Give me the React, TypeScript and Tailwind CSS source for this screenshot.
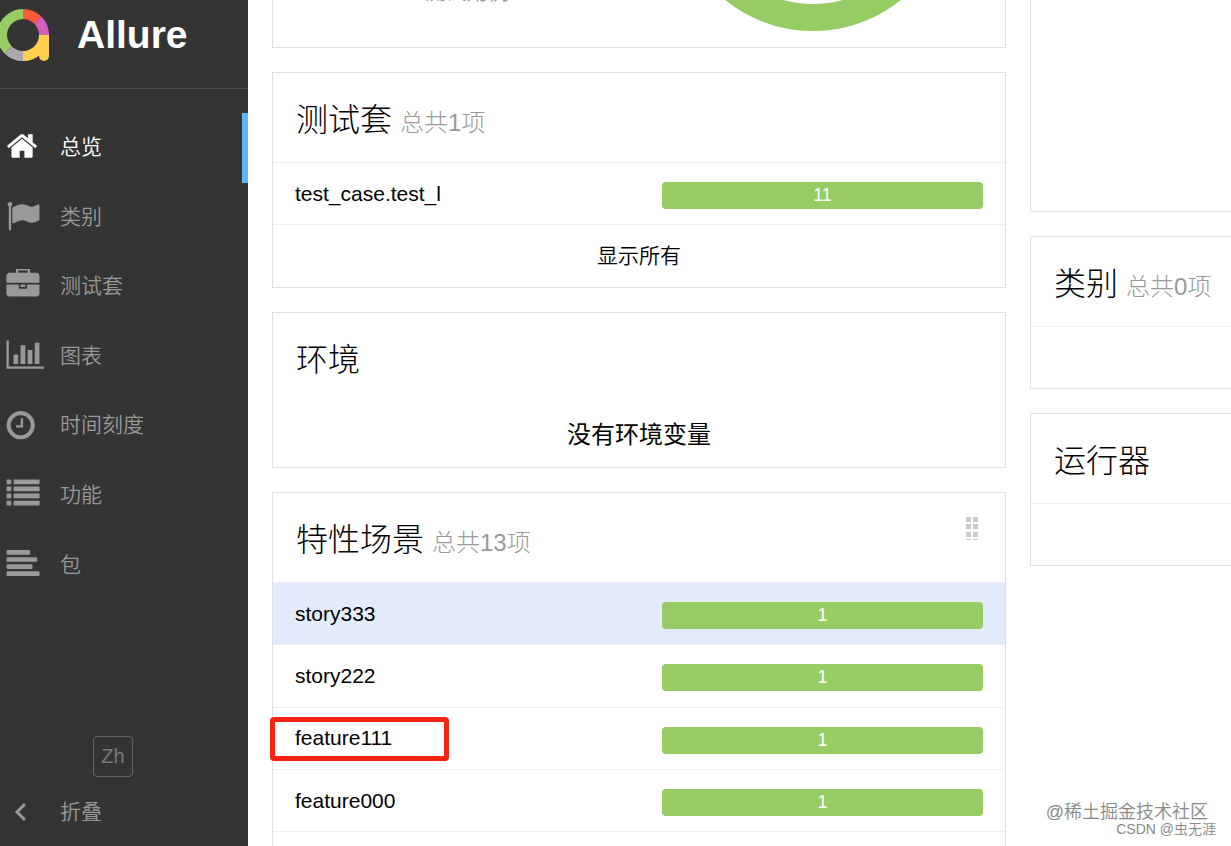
type NavEntry = {
  label: string;
  icon: keyof typeof icons;
};

type Row = {
  name: string;
  passed: number;
  hovered?: boolean;
  marked?: boolean;
};

const icons = {
  home: {
    viewBox: "32 32 2048 1792",
    d: "M1472 992v480q0 26-19 45t-45 19h-384v-384h-256v384h-384q-26 0-45-19t-19-45v-480q0-1 .5-3t.5-3l575-474 575 474q1 2 1 6zm223-69l-62 74q-8 9-21 11h-3q-13 0-21-7l-692-577-692 577q-12 8-24 7-13-2-21-11l-62-74q-8-10-7-23.5t11-21.5l719-599q32-26 76-26t76 26l244 204v-195q0-14 9-23t23-9h192q14 0 23 9t9 23v408l219 182q10 8 11 21.5t-7 23.5z",
  },
  flag: {
    viewBox: "-16 24 2048 1792",
    d: "M320 256q0 72-64 110v1266q0 13-9.5 22.5t-22.5 9.5h-64q-13 0-22.5-9.5t-9.5-22.5v-1266q-64-38-64-110 0-53 37.5-90.5t90.5-37.5 90.5 37.5 37.5 90.5zm1472 64v763q0 25-12.5 38.5t-39.5 27.5q-215 116-369 116-61 0-123.5-22t-108.5-48-115.5-48-142.5-22q-192 0-464 146-17 9-33 9-26 0-45-19t-19-45v-742q0-32 31-55 21-14 79-43 236-120 421-120 107 0 200 29t219 88q38 19 88 19 54 0 117.5-21t110-47 88-47 54.5-21q26 0 45 19t19 45z",
  },
  briefcase: {
    viewBox: "-16 48 2048 1792",
    d: "M640 256h512v-128h-512v128zm1152 640v480q0 66-47 113t-113 47h-1472q-66 0-113-47t-47-113v-480h672v160q0 26 19 45t45 19h320q26 0 45-19t19-45v-160h672zm-768 0v128h-256v-128h256zm768-480v384h-1792v-384q0-66 47-113t113-47h352v-160q0-40 28-68t68-28h576q40 0 68 28t28 68v160h352q66 0 113 47t47 113z",
  },
  chart: {
    viewBox: "-16 48 2048 1792",
    d: "M640 896v512h-256v-512h256zm384-512v1024h-256v-1024h256zm1024 1152v128h-2048v-1536h128v1408h1920zm-640-896v768h-256v-768h256zm384-384v1152h-256v-1152h256z",
  },
  clock: {
    viewBox: "104 16 2048 1792",
    d: "M1024 544v448q0 14-9 23t-23 9h-320q-14 0-23-9t-9-23v-64q0-14 9-23t23-9h224v-352q0-14 9-23t23-9h64q14 0 23 9t9 23zm416 352q0-148-73-273t-198-198-273-73-273 73-198 198-73 273 73 273 198 198 273 73 273-73 198-198 73-273zm224 0q0 209-103 385.5t-279.5 279.5-385.5 103-385.5-103-279.5-279.5-103-385.5 103-385.5 279.5-279.5 385.5-103 385.5 103 279.5 279.5 103 385.5z",
  },
  list: {
    viewBox: "-24 48 2048 1792",
    d: "M32 128h192q32 0 32 32v192q0 32-32 32h-192q-32 0-32-32v-192q0-32 32-32zm384 0h1344q32 0 32 32v192q0 32-32 32h-1344q-32 0-32-32v-192q0-32 32-32zM32 512h192q32 0 32 32v192q0 32-32 32h-192q-32 0-32-32v-192q0-32 32-32zm384 0h1344q32 0 32 32v192q0 32-32 32h-1344q-32 0-32-32v-192q0-32 32-32zM32 896h192q32 0 32 32v192q0 32-32 32h-192q-32 0-32-32v-192q0-32 32-32zm384 0h1344q32 0 32 32v192q0 32-32 32h-1344q-32 0-32-32v-192q0-32 32-32zM32 1280h192q32 0 32 32v192q0 32-32 32h-192q-32 0-32-32v-192q0-32 32-32zm384 0h1344q32 0 32 32v192q0 32-32 32h-1344q-32 0-32-32v-192q0-32 32-32z",
  },
  align: {
    viewBox: "-24 16 2048 1792",
    d: "M64 128h1152q64 0 64 64v128q0 64-64 64h-1152q-64 0-64-64v-128q0-64 64-64zM64 512h1536q64 0 64 64v128q0 64-64 64h-1536q-64 0-64-64v-128q0-64 64-64zM64 896h1280q64 0 64 64v128q0 64-64 64h-1280q-64 0-64-64v-128q0-64 64-64zM64 1280h1664q64 0 64 64v128q0 64-64 64h-1664q-64 0-64-64v-128q0-64 64-64z",
  },
};

const navEntries: NavEntry[] = [
  { label: "总览", icon: "home" },
  { label: "类别", icon: "flag" },
  { label: "测试套", icon: "briefcase" },
  { label: "图表", icon: "chart" },
  { label: "时间刻度", icon: "clock" },
  { label: "功能", icon: "list" },
  { label: "包", icon: "align" },
];

const suites: Row[] = [{ name: "test_case.test_l", passed: 11 }];

const features: Row[] = [
  { name: "story333", passed: 1, hovered: true },
  { name: "story222", passed: 1 },
  { name: "feature111", passed: 1, marked: true },
  { name: "feature000", passed: 1 },
];

function Logo() {
  return (
    <svg className="h-[52px] w-[49px] shrink-0" viewBox="0 0 49 52" fill="none" strokeWidth="10">
      <path d="M23 5A21 21 0 0 1 37.85 11.15" stroke="#fd5a3e" />
      <path d="M37.85 11.15A21 21 0 0 1 44 26" stroke="#d35ebe" />
      <path d="M23 47A21 21 0 0 1 8.15 40.85" stroke="#aaa" />
      <path d="M8.15 40.85A21 21 0 0 1 23 5" stroke="#97cc64" />
      <path d="M44 26A21 21 0 0 1 23 47" stroke="#ffd050" />
      <path d="M39 26h10v21a5 5 0 0 1-10 0z" fill="#ffd050" stroke="none" />
    </svg>
  );
}

function Sidebar() {
  return (
    <aside className="flex w-[248px] shrink-0 flex-col bg-[#343434] text-[21px] font-[350] text-[#999]">
      <div className="flex h-[89px] items-start gap-7 border-b border-[#515151] pt-[9px]">
        <Logo />
        <span className="text-[39px] leading-[52px] font-bold text-white">Allure</span>
      </div>

      <nav className="mt-6 flex h-[487px] flex-col">
        {navEntries.map((entry, index) => (
          <a
            key={entry.label}
            href="#"
            className={
              index === 0
                ? "flex flex-1 items-center gap-4 border-r-6 border-[#64b5f6] pb-0.5 pl-1.5 text-white"
                : "flex flex-1 items-center gap-4 pb-0.5 pl-1.5"
            }
          >
            <svg
              className="h-[33px] w-[38px] shrink-0"
              viewBox={icons[entry.icon].viewBox}
              fill="currentColor"
            >
              <path d={icons[entry.icon].d} />
            </svg>
            {entry.label}
          </a>
        ))}
      </nav>

      <div className="mt-auto flex flex-col">
        <button
          type="button"
          className="ml-[93px] h-[41px] w-10 rounded border border-[#666] pb-0.5 text-[20px] text-[#777]"
        >
          Zh
        </button>
        <button type="button" className="flex h-[69px] items-center gap-[34px] pl-[14px]">
          <svg
            className="h-5 w-3"
            viewBox="0 0 12 20"
            fill="none"
            stroke="currentColor"
            strokeWidth="3"
          >
            <path d="M11 2 3 10l8 8" />
          </svg>
          折叠
        </button>
      </div>
    </aside>
  );
}

function PanelTitle({ title, total }: { title: string; total?: string }) {
  return (
    <h2 className="flex h-[89px] items-center pt-1 pl-[23px] text-[32px] font-light whitespace-nowrap">
      <span>
        {title}
        {total && <small className="ml-2 text-[24px] text-[#999]">{total}</small>}
      </span>
    </h2>
  );
}

function ResultRow({ row }: { row: Row }) {
  return (
    <a
      href="#"
      className={
        row.hovered
          ? "relative flex flex-1 items-center justify-between border-t border-[#eceff1] bg-[#e3ecff] px-[22px]"
          : "relative flex flex-1 items-center justify-between border-t border-[#eceff1] px-[22px]"
      }
    >
      <span>{row.name}</span>
      <span className="mt-1 h-[27px] w-[321px] rounded-[4px] bg-[#97cc64] text-center text-[18px] leading-[27px] text-white">
        {row.passed}
      </span>
      {row.marked && (
        <span className="absolute top-[9px] -left-[3px] h-11 w-[179px] rounded-[4px] border-5 border-[#f52314]" />
      )}
    </a>
  );
}

function DragHandle() {
  return (
    <svg className="absolute top-6 right-[27px] h-6 w-3" viewBox="0 0 12 24" fill="#ccc">
      <path d="M0 0h5v5H0zM7 0h5v5H7zM0 7h5v5H0zM7 7h5v5H7zM0 15h5v5H0zM7 15h5v5H7zM0 22h5v1H0zM7 22h5v1H7z" />
    </svg>
  );
}

export default function App() {
  return (
    <div className="relative flex h-screen overflow-hidden bg-white font-['Liberation_Sans','Noto_Sans_CJK_SC',sans-serif] text-[21px] text-black">
      <Sidebar />

      <main className="flex min-w-0 flex-1 gap-6 pl-6">
        <div className="flex min-w-0 flex-1 flex-col gap-6">
          <section className="flex h-12 shrink-0 items-start justify-between border border-t-0 border-[#e0e0e0] pr-[99px] pl-[152px]">
            <p className="flex h-1 items-end overflow-hidden leading-6 text-[#999]">测试用例</p>
            <svg className="h-[31px] w-[186px]" viewBox="0 0 186 31">
              <circle cx="93" cy="-109" r="126.5" fill="none" stroke="#97cc64" strokeWidth="27" />
            </svg>
          </section>

          <section className="shrink-0 border border-[#e0e0e0]">
            <PanelTitle title="测试套" total="总共1项" />
            <div className="flex h-[62px]">
              {suites.map((row) => (
                <ResultRow key={row.name} row={row} />
              ))}
            </div>
            <a
              href="#"
              className="flex h-[63px] items-center justify-center border-t border-[#eceff1] font-[350]"
            >
              显示所有
            </a>
          </section>

          <section className="shrink-0 border border-[#e0e0e0]">
            <PanelTitle title="环境" />
            <p className="flex h-[65px] items-center justify-center text-[24px]">没有环境变量</p>
          </section>

          <section className="relative flex-1 border border-b-0 border-[#e0e0e0]">
            <PanelTitle title="特性场景" total="总共13项" />
            <DragHandle />
            <div className="flex h-[250px] flex-col border-b border-[#eceff1]">
              {features.map((row) => (
                <ResultRow key={row.name} row={row} />
              ))}
            </div>
          </section>
        </div>

        <div className="flex w-[201px] shrink-0 flex-col gap-6">
          <section className="h-[212px] border border-t-0 border-r-0 border-[#e0e0e0]" />

          <section className="border border-r-0 border-[#e0e0e0]">
            <PanelTitle title="类别" total="总共0项" />
            <div className="h-[62px] border-t border-[#eceff1]" />
          </section>

          <section className="border border-r-0 border-[#e0e0e0]">
            <PanelTitle title="运行器" />
            <div className="h-[62px] border-t border-[#eceff1]" />
          </section>
        </div>
      </main>

      <div className="absolute right-[15px] bottom-[9px] text-right font-[350] text-[#888]">
        <p className="mr-2 text-[18px] leading-[18px]">@稀土掘金技术社区</p>
        <p className="text-[14px] leading-4">CSDN @虫无涯</p>
      </div>
    </div>
  );
}
